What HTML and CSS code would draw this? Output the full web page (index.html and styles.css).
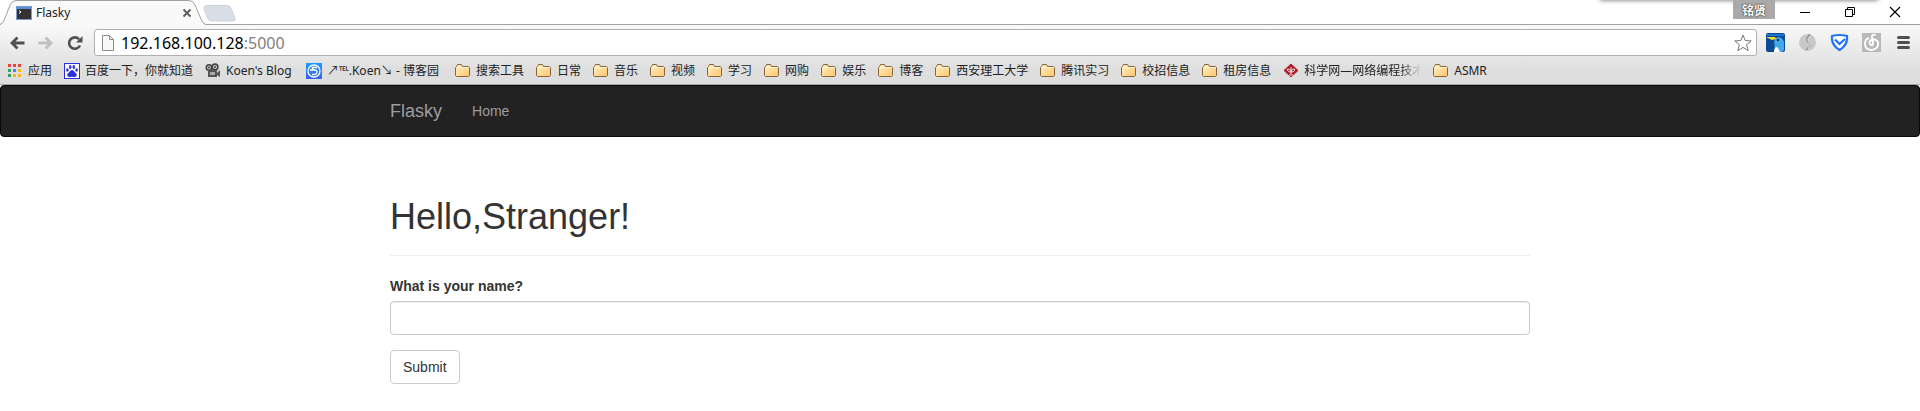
FILE: index.html
```html
<!DOCTYPE html>
<html lang="zh-CN">
<head>
    <meta charset="UTF-8">
    <meta name="viewport" content="width=device-width, initial-scale=1.0">
    <title>Flasky</title>
    <link rel="stylesheet" href="styles.css">
</head>
<body>
    <!-- shared icons -->
    <svg class="defs" width="0" height="0" aria-hidden="true">
        <defs>
            <linearGradient id="folder-fill" x1="0" y1="0" x2="1" y2="1">
                <stop offset="0" stop-color="#fff1c4"/>
                <stop offset="1" stop-color="#fdc56d"/>
            </linearGradient>
            <linearGradient id="blue-fill" x1="0" y1="0" x2="0" y2="1">
                <stop offset="0" stop-color="#1a9cff"/>
                <stop offset="1" stop-color="#3a62f0"/>
            </linearGradient>
        </defs>
        <symbol id="folder" viewBox="0 0 16 16">
            <path d="M1.5 13.5h12l1-1v-8l-1-1h-6l-1-2h-4l-1 2-1 1v8z" fill="url(#folder-fill)" stroke="#86643c"/>
            <path d="M2 4.500h12" stroke="#fff6da"/>
        </symbol>
    </svg>

    <div class="browser">
        <div class="tab-strip">
            <div class="tab">
                <svg class="tab-shape" width="206" height="25" viewBox="0 0 206 25">
                    <path d="M0 25 Q3 24 5 18 L10 5 Q12 .5 16 .5 H189 Q193 .5 195 5 L201 19 Q203 24.500 206 24.500 V25 Z" fill="#f9f9f9"/>
                    <path d="M0 24.500 Q3 24 5 18 L10 5 Q12 .5 16 .5 H189 Q193 .5 195 5 L201 19 Q203 24.500 206 24.500" fill="none" stroke="#a0a0a0"/>
                </svg>
                <svg width="16" height="16" viewBox="0 0 16 16">
                    <rect x=".5" y="1.500" width="15" height="13" fill="#333" stroke="#7b9cc9"/>
                    <path d="M1 3h14" stroke="#5a8fd8" stroke-width="2"/>
                    <path d="M3 5.500l2 1.500-2 1.500" fill="none" stroke="#fff"/>
                </svg>
                <span class="tab-title">Flasky</span>
                <button class="icon-btn" aria-label="Close tab">
                    <svg width="10" height="10" viewBox="0 0 10 10"><path d="M1.500 1.500l7 7M8.500 1.500l-7 7" stroke="#5a5a5a" stroke-width="1.800"/></svg>
                </button>
            </div>
            <button class="icon-btn new-tab" aria-label="New tab">
                <svg width="34" height="17" viewBox="0 0 34 17"><path d="M4 .5H24Q27 .5 28 3L32 13Q33 16 30 16H9Q6 16 5 14L1 4Q0 .5 4 .5Z" fill="#d8dee7" stroke="#cfd3d9"/></svg>
            </button>
            <div class="window-shadow"></div>
            <div class="window-controls">
                <button class="profile">铭贤</button>
                <button class="icon-btn" aria-label="Minimize">
                    <svg width="12" height="12" viewBox="0 0 12 12"><path d="M1 6.500h10" stroke="#000"/></svg>
                </button>
                <button class="icon-btn" aria-label="Restore">
                    <svg width="12" height="12" viewBox="0 0 12 12"><path d="M1.500 3.500h7v7h-7zM3.500 3.500v-2h7v7h-2" fill="none" stroke="#000"/></svg>
                </button>
                <button class="icon-btn" aria-label="Close">
                    <svg width="12" height="12" viewBox="0 0 12 12"><path d="M1 1l10 10M11 1L1 11" stroke="#000" stroke-width="1.200"/></svg>
                </button>
            </div>
        </div>

        <div class="toolbar">
            <div class="nav-buttons">
                <button class="icon-btn" aria-label="Back">
                    <svg width="16" height="16" viewBox="0 0 16 16"><path d="M15.500 8H3M8.500 2.500L3 8l5.500 5.500" fill="none" stroke="#505050" stroke-width="2.800"/></svg>
                </button>
                <button class="icon-btn" aria-label="Forward">
                    <svg width="16" height="16" viewBox="0 0 16 16"><path d="M.5 8H13M7.500 2.500L13 8l-5.500 5.500" fill="none" stroke="#c0c0c0" stroke-width="2.800"/></svg>
                </button>
                <button class="icon-btn" aria-label="Reload">
                    <svg width="16" height="16" viewBox="0 0 16 16"><path d="M13 10.500a5.700 5.700 0 1 1-1-6.300" fill="none" stroke="#505050" stroke-width="2.600"/><path d="M15.500 1v6.500H9z" fill="#505050"/></svg>
                </button>
            </div>
            <div class="address-bar">
                <svg width="12" height="16" viewBox="0 0 12 16"><path d="M.5.5h7l4 4v11H.5z" fill="#f8f8f8" stroke="#8c8c8c"/><path d="M7.500.5v4h4" fill="none" stroke="#8c8c8c"/></svg>
                <div class="url" role="textbox" contenteditable="true" spellcheck="false" aria-label="Address">192.168.100.128<span class="port">:5000</span></div>
                <button class="icon-btn" aria-label="Bookmark this page">
                    <svg width="18" height="18" viewBox="0 0 18 18"><path d="M9 1l2.200 5.500 6 .4-4.600 3.800 1.600 5.900L9 13.400l-5.200 3.200 1.600-5.900L.8 6.900l6-.4z" fill="#fff" stroke="#777" stroke-linejoin="round"/></svg>
                </button>
            </div>
            <div class="extensions">
                <button class="icon-btn" aria-label="Bird">
                    <svg width="19" height="19" viewBox="0 0 19 19"><rect width="19" height="19" rx="2" fill="#0d4a94"/><path d="M1 1h17v2H1z" fill="#1976c8"/><path d="M8 19C10 14 7 9 9 6c2-3 8-2 9 3v8l-2 2z" fill="#45a8ea"/><path d="M0 4h9l1 2-4 1z" fill="#f6dc2c"/><path d="M8 19c0-5 3-6 4-4l2 4z" fill="#fff"/><circle cx="12" cy="7" r="1.200" fill="#08284e"/></svg>
                </button>
                <button class="icon-btn" aria-label="Swirl">
                    <svg width="19" height="19" viewBox="0 0 19 19"><circle cx="9.500" cy="9.500" r="8.500" fill="#c8c8c8"/><path d="M12 1L9 5q-1 2 1 4 3 2 1 5l-3 3" fill="none" stroke="#929292" stroke-width="1.500"/><path d="M13 3q-5 3-2 6 2 3-1 7" fill="none" stroke="#dcdcdc"/></svg>
                </button>
                <button class="icon-btn" aria-label="Shield">
                    <svg width="19" height="19" viewBox="0 0 19 19"><path d="M2 3q7-2 15 0 1 9-7.500 14Q1 12 2 3z" fill="#fff" stroke="#1e73ff" stroke-width="2.200"/><path d="M5 6.500l4.500 4.500L15 6" fill="none" stroke="#1e73ff" stroke-width="2.200"/></svg>
                </button>
                <button class="icon-btn" aria-label="Music">
                    <svg width="19" height="19" viewBox="0 0 19 19"><rect width="19" height="19" fill="#b9b9b9"/><path d="M13.500 2q-4-1-3.500 2l1 6q0 3-2 2-3-2 0-5 4-2 7 2 1 7-6 8-7 0-7-6 0-5 4-6" fill="none" stroke="#fff" stroke-width="1.900"/></svg>
                </button>
                <button class="icon-btn" aria-label="Menu">
                    <svg width="13" height="13" viewBox="0 0 13 13"><path d="M1.500 1.500h10M1.500 6.500h10M1.500 11.500h10" stroke="#505050" stroke-width="3" stroke-linecap="round"/></svg>
                </button>
            </div>
        </div>

        <nav class="bookmarks">
            <a href="#"><svg width="15" height="16" viewBox="0 0 15 16"><path d="M0 1h3v3H0zM5 1h3v3H5zM10 1h3v3h-3z" fill="#ea4335"/><path d="M0 6h3v3H0zM0 11h3v3H0z" fill="#34a060"/><path d="M5 6h3v3H5z" fill="#4285f4"/><path d="M10 6h3v3h-3zM5 11h3v3H5zM10 11h3v3h-3z" fill="#f5b912"/></svg><span>应用</span></a>
            <a href="#"><svg width="16" height="16" viewBox="0 0 16 16"><rect x=".5" y=".5" width="15" height="15" fill="#fff" stroke="#2b32dd"/><g fill="#2b32dd"><ellipse cx="6.200" cy="4" rx="1.300" ry="2"/><ellipse cx="9.800" cy="4" rx="1.300" ry="2"/><ellipse cx="3.400" cy="7" rx="1.300" ry="1.800"/><ellipse cx="12.600" cy="7" rx="1.300" ry="1.800"/><path d="M8 7q2 0 3 2.500 3 2 1 4-2 1-4 0-2 1-4 0-2-2 1-4Q6 7 8 7z"/></g></svg><span>百度一下，你就知道</span></a>
            <a href="#"><svg width="16" height="16" viewBox="0 0 16 16"><circle cx="4" cy="4.500" r="2.700" fill="#ccc" stroke="#444" stroke-width="1.600"/><circle cx="10" cy="4" r="2.900" fill="#ccc" stroke="#444" stroke-width="1.600"/><path d="M3 7h9v7H3zM12 10l3-3v7l-3-2z" fill="#555"/><path d="M5 9h5v3H5z" fill="#aaa"/><circle cx="4" cy="4.500" r="1" fill="#444"/><circle cx="10" cy="4" r="1" fill="#444"/></svg><span class="blog-title">Koen's Blog</span></a>
            <a href="#"><svg width="16" height="16" viewBox="0 0 16 16"><rect width="16" height="16" fill="url(#blue-fill)"/><circle cx="8" cy="8" r="6" fill="none" stroke="#fff" stroke-width="1.300"/><path d="M11 4.500H6.500V7H9q2 0 2 2t-2 2.500H6M4 7h3" fill="none" stroke="#fff" stroke-width="1.300"/></svg><span class="cnblogs-title">↗℡.Koen↘ - 博客园</span></a>
            <a href="#"><svg width="16" height="16"><use href="#folder"/></svg><span>搜索工具</span></a>
            <a href="#"><svg width="16" height="16"><use href="#folder"/></svg><span>日常</span></a>
            <a href="#"><svg width="16" height="16"><use href="#folder"/></svg><span>音乐</span></a>
            <a href="#"><svg width="16" height="16"><use href="#folder"/></svg><span>视频</span></a>
            <a href="#"><svg width="16" height="16"><use href="#folder"/></svg><span>学习</span></a>
            <a href="#"><svg width="16" height="16"><use href="#folder"/></svg><span>网购</span></a>
            <a href="#"><svg width="16" height="16"><use href="#folder"/></svg><span>娱乐</span></a>
            <a href="#"><svg width="16" height="16"><use href="#folder"/></svg><span>博客</span></a>
            <a href="#"><svg width="16" height="16"><use href="#folder"/></svg><span>西安理工大学</span></a>
            <a href="#"><svg width="16" height="16"><use href="#folder"/></svg><span>腾讯实习</span></a>
            <a href="#"><svg width="16" height="16"><use href="#folder"/></svg><span>校招信息</span></a>
            <a href="#"><svg width="16" height="16"><use href="#folder"/></svg><span>租房信息</span></a>
            <a href="#"><svg width="16" height="16" viewBox="0 0 16 16"><path d="M8 1l7 6.500L8 14 1 7.500z" fill="#b01c28" stroke="#b01c28" stroke-linejoin="round"/><path d="M8 11V4M8 9Q4 9 4.500 6 7 5 8 9q1-4 3.500-3Q12 9 8 9M6 12h4" fill="none" stroke="#f6dede"/></svg><span class="long-title">科学网—网络编程技术</span></a>
            <a href="#"><svg width="16" height="16"><use href="#folder"/></svg><span>ASMR</span></a>
        </nav>
    </div>

    <div class="page">
        <nav class="navbar">
            <div class="container">
                <a class="navbar-brand" href="#">Flasky</a>
                <a class="navbar-link" href="#">Home</a>
            </div>
        </nav>

        <main class="container">
            <div class="page-header">
                <h1>Hello,Stranger!</h1>
            </div>
            <form onsubmit="return false">
                <div class="form-group">
                    <label for="name">What is your name?</label>
                    <input type="text" id="name" name="name" class="form-control" autocomplete="off" required>
                </div>
                <button type="submit" class="btn">Submit</button>
            </form>
        </main>
    </div>
</body>
</html>
```

FILE: styles.css
```css
* {
    box-sizing: border-box;
}
body {
    margin: 0;
    background-color: #fff;
    color: #333;
    font-family: "Liberation Sans", Arial, sans-serif;
    font-size: 14px;
    line-height: 20px;
}
a {
    text-decoration: none;
}
svg {
    display: block;
    flex: none;
}
.defs {
    position: absolute;
}

/* browser window */
.browser {
    font-family: "Noto Sans", "Noto Sans CJK SC", sans-serif;
    font-size: 12px;
    line-height: 16px;
    color: #222;
    background: linear-gradient(#fff 0, #fff 25px, #f9f9f9 25px, #dedede 70px);
    border-bottom: 1px solid #a8a8a8;
}
.icon-btn {
    display: flex;
    padding: 0;
    border: none;
    background: none;
    cursor: pointer;
}
.tab-strip {
    position: relative;
    display: flex;
    height: 25px;
    border-bottom: 1px solid #a0a0a0;
}
.tab {
    position: relative;
    display: flex;
    align-items: center;
    gap: 4px;
    width: 206px;
    height: 25px;
    padding: 0 14px 0 16px;
}
.tab > * {
    position: relative;
}
.tab .tab-shape {
    position: absolute;
    left: 0;
    top: 0;
}
.tab-title {
    flex: 1;
}
.new-tab {
    align-self: center;
    margin-left: -3px;
    padding-top: 2px;
}
.window-shadow {
    position: absolute;
    top: -8px;
    right: 42px;
    width: 278px;
    height: 8px;
    box-shadow: 0 0 5px rgba(0, 0, 0, 0.6);
}
.window-controls {
    position: relative;
    display: flex;
    align-items: center;
    gap: 33px;
    margin-left: auto;
    padding-right: 19px;
}
.profile {
    align-self: flex-start;
    width: 42px;
    height: 19px;
    margin-right: -9px;
    padding: 0;
    border: none;
    background-color: #aaa;
    color: #fff;
    font: bold 12px/19px "Noto Sans CJK SC", sans-serif;
    text-shadow: 0 0 2px #333, 0 0 1px #333;
}
.toolbar {
    display: flex;
    align-items: center;
    padding: 4px 10px 0 9px;
}
.nav-buttons {
    display: flex;
    gap: 13px;
    margin-right: 11px;
}
.address-bar {
    flex: 1;
    display: flex;
    align-items: center;
    gap: 7px;
    height: 27px;
    padding: 0 4px 0 7px;
    background-color: #fff;
    border: 1px solid #b0b0b0;
    border-radius: 3px;
}
.url {
    flex: 1;
    color: #000;
    font-size: 16px;
    line-height: 22px;
    outline: none;
}
.port {
    color: #808080;
}
.extensions {
    display: flex;
    align-items: center;
    gap: 13px;
    margin-left: 9px;
}
.extensions .icon-btn:last-child {
    margin-left: 3px;
}
.bookmarks {
    display: flex;
    align-items: center;
    gap: 12px;
    height: 28px;
    padding: 2px 0 0 8px;
    white-space: nowrap;
    overflow: hidden;
}
.bookmarks a {
    display: flex;
    align-items: center;
    gap: 5px;
    color: #222;
}
.blog-title {
    min-width: 68px;
}
.cnblogs-title {
    min-width: 116px;
}
.long-title {
    width: 117px;
    overflow: hidden;
    -webkit-mask-image: linear-gradient(to right, #000 96px, transparent);
    mask-image: linear-gradient(to right, #000 96px, transparent);
}

/* page */
.container {
    max-width: 1170px;
    margin: 0 auto;
    padding: 0 15px;
}
.navbar {
    background-color: #222;
    border: 1px solid #080808;
    border-radius: 4px;
}
.navbar .container {
    display: flex;
    gap: 30px;
}
.navbar a {
    padding: 15px 0;
    color: #9d9d9d;
}
.navbar a:hover {
    color: #fff;
}
.navbar-brand {
    font-size: 18px;
}
.page-header {
    margin: 60px 0 20px;
    padding-bottom: 9px;
    border-bottom: 1px solid #eee;
}
h1 {
    margin: 0 0 10px;
    font-size: 36px;
    font-weight: 500;
    line-height: 39px;
}
.form-group {
    margin-bottom: 15px;
}
label {
    display: block;
    margin-bottom: 5px;
    font-weight: bold;
}
.form-control {
    display: block;
    width: 100%;
    height: 34px;
    padding: 6px 12px;
    border: 1px solid #ccc;
    border-radius: 4px;
    color: #555;
    font: inherit;
    box-shadow: inset 0 1px 1px rgba(0, 0, 0, 0.075);
}
.form-control:focus {
    border-color: #66afe9;
    outline: 0;
}
.btn {
    padding: 6px 12px;
    background-color: #fff;
    border: 1px solid #ccc;
    border-radius: 4px;
    color: #333;
    font: inherit;
    cursor: pointer;
}
.btn:hover {
    background-color: #e6e6e6;
}
```
